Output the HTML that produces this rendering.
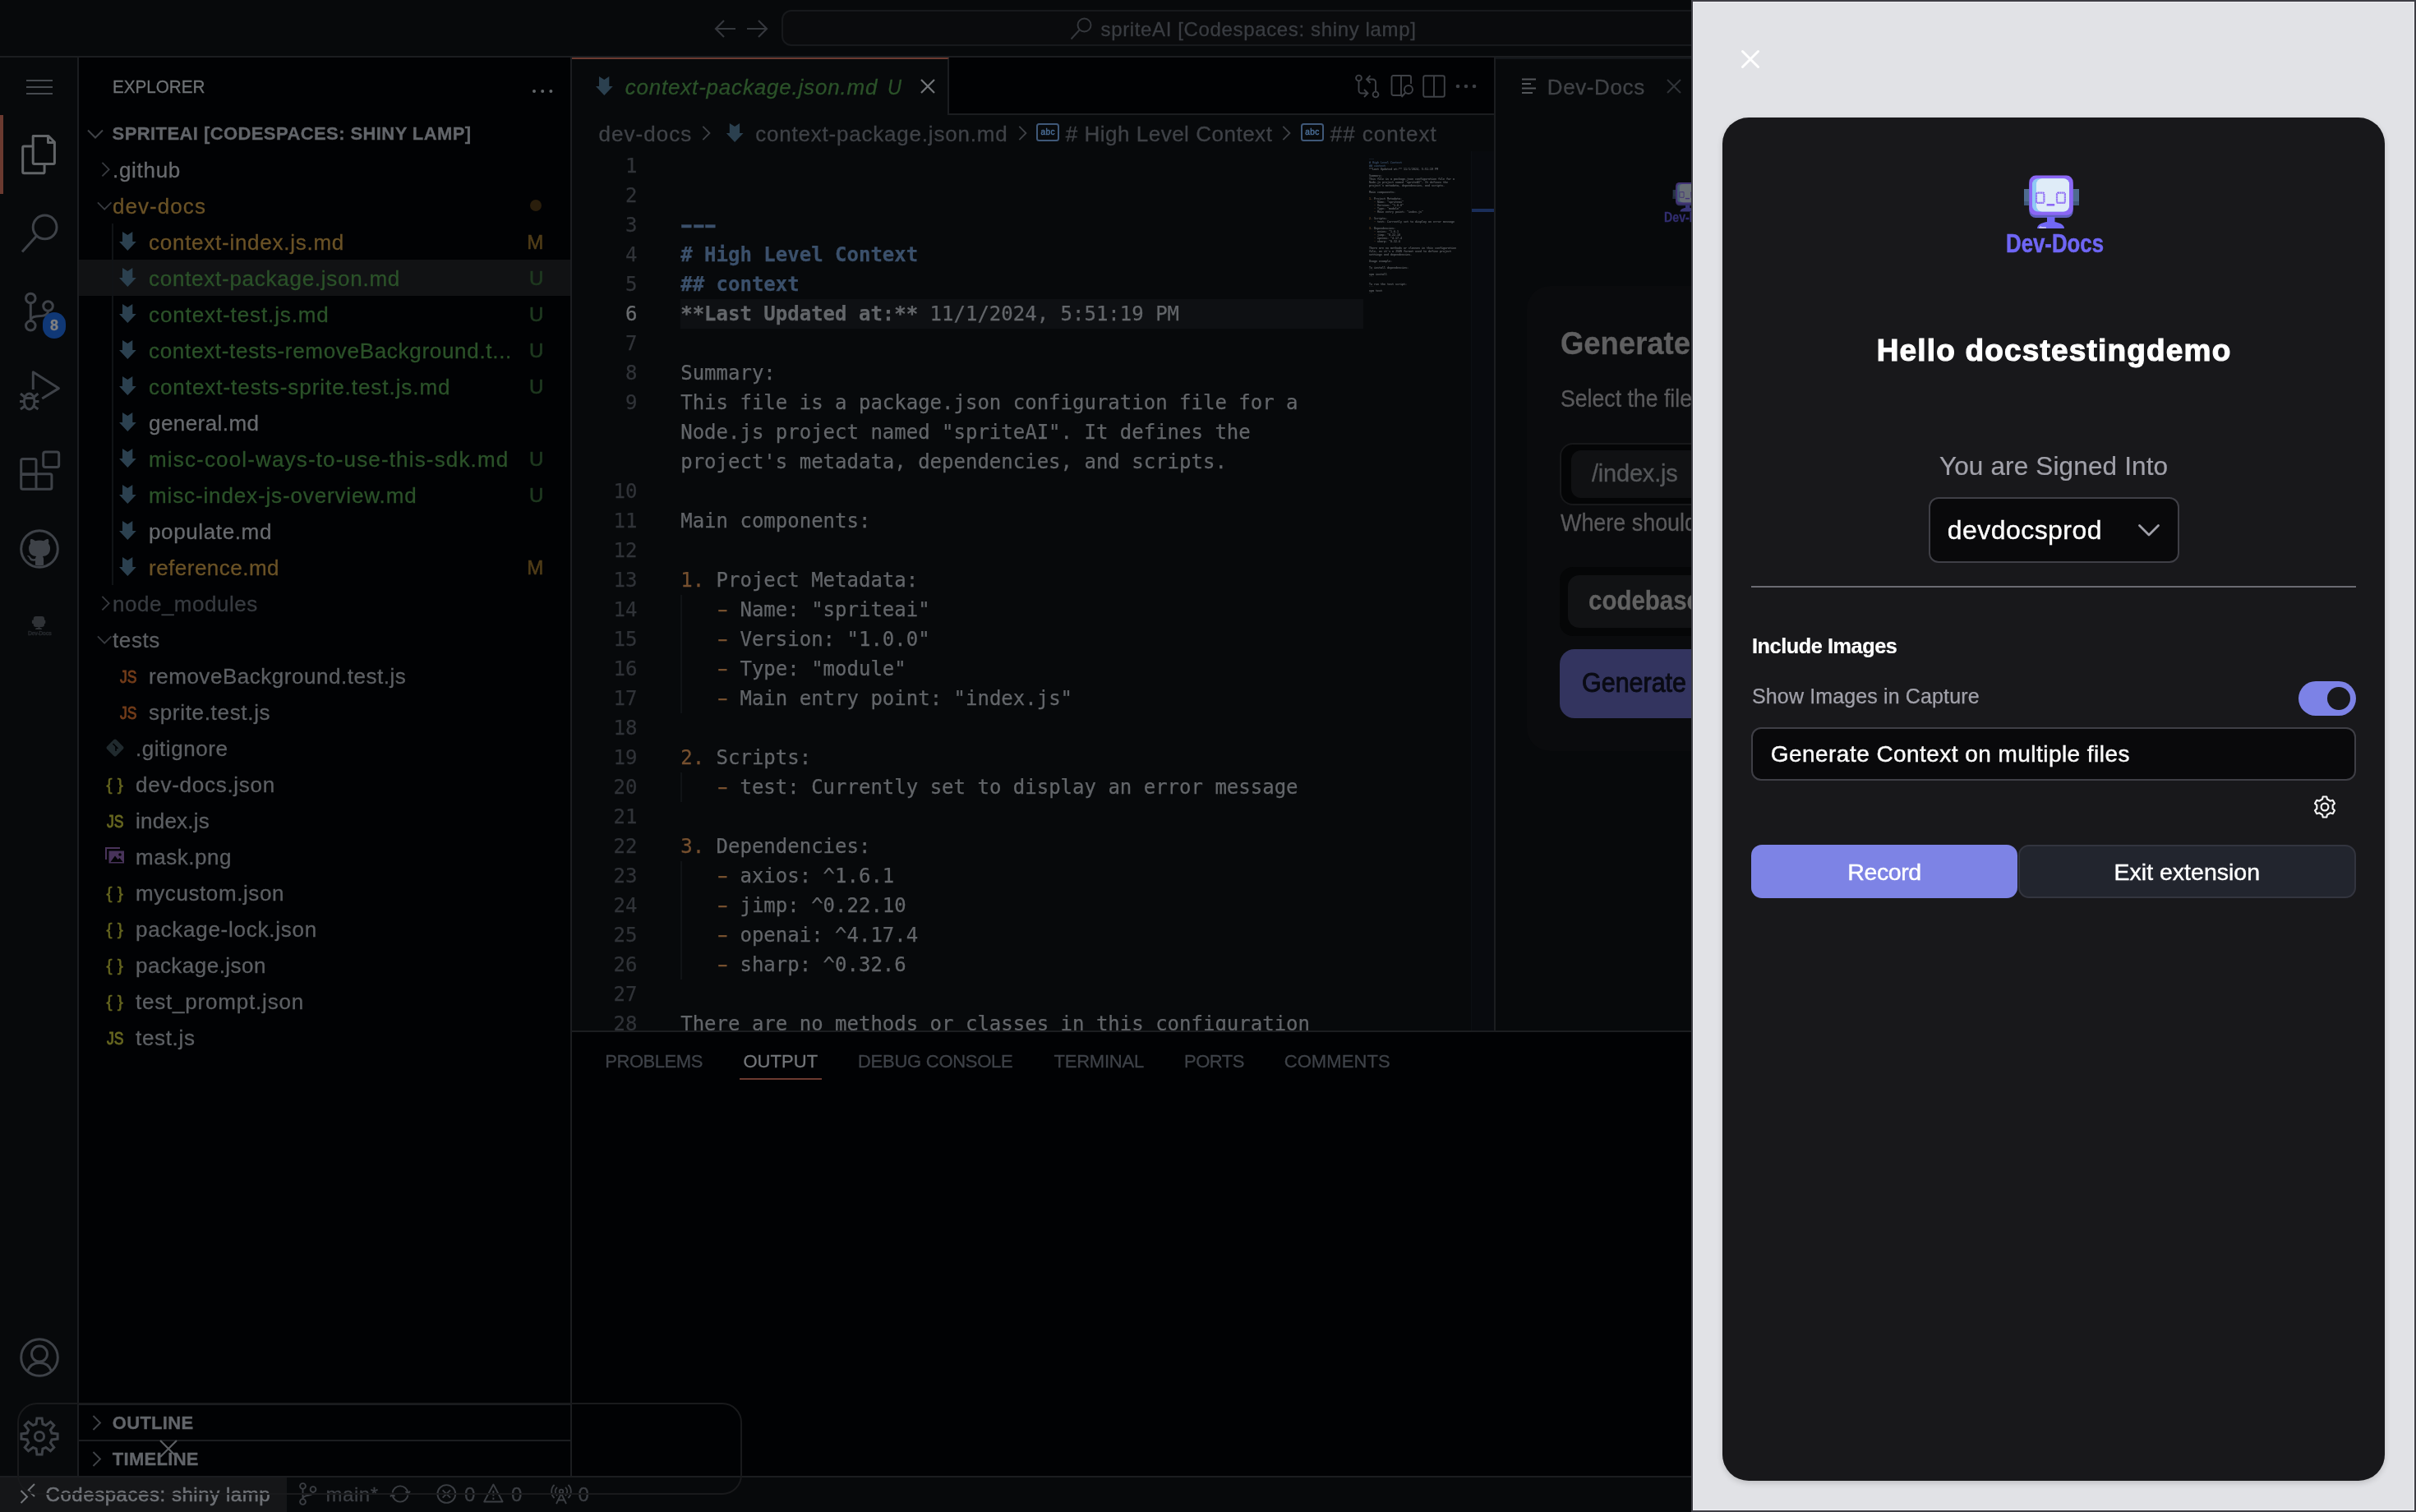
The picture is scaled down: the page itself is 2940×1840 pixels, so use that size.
<!DOCTYPE html>
<html lang="en"><head><meta charset="utf-8"><title>spriteAI [Codespaces: shiny lamp]</title>
<style>
html,body{margin:0;padding:0;background:#000;}
body{width:2940px;height:1840px;overflow:hidden;position:relative;font-family:"Liberation Sans", sans-serif;will-change:transform;}
.a{position:absolute;box-sizing:border-box;}
.t{position:absolute;white-space:pre;}
.s{font-family:"Liberation Sans", sans-serif;}
.m{font-family:"DejaVu Sans Mono", "Liberation Mono", monospace;}
svg{position:absolute;overflow:visible;}

</style></head>
<body>
<div class="a" style="left:0px;top:0px;width:2940px;height:1840px;background:#07090b;"></div>
<div class="a" style="left:0px;top:0px;width:2940px;height:70px;background:#07090b;border-bottom:2px solid #1b1d20;"></div>
<div class="a" style="left:0px;top:70px;width:96px;height:1726px;background:#07090b;border-right:2px solid #1b1d20;"></div>
<div class="a" style="left:96px;top:70px;width:600px;height:1726px;background:#010204;border-right:2px solid #1b1d20;"></div>
<div class="a" style="left:0px;top:1796px;width:2940px;height:44px;background:#07090b;border-top:2px solid #1b1d20;"></div>
<svg style="left:868px;top:22px" width="28" height="26" viewBox="0 0 28 26" ><path d="M13 3 L3 13 L13 23 M3 13 H27" fill="none" stroke="#35383d" stroke-width="2.2"/></svg>
<svg style="left:908px;top:22px" width="28" height="26" viewBox="0 0 28 26" ><path d="M15 3 L25 13 L15 23 M25 13 H1" fill="none" stroke="#35383d" stroke-width="2.2"/></svg>
<div class="a" style="left:951px;top:12px;width:1200px;height:44px;background:#0a0b0d;border:2px solid #17191c;border-radius:12px;"></div>
<svg style="left:1302px;top:20px" width="28" height="30" viewBox="0 0 28 30" ><circle cx="17.5" cy="10.5" r="8" fill="none" stroke="#35383d" stroke-width="1.9"/><path d="M11.5 16.5 L1.5 27.5" stroke="#35383d" stroke-width="1.9"/></svg>
<div class="t s" style="letter-spacing:0.641px;left:1339.5px;top:20.1px;font-size:24px;line-height:31px;color:#3a3d42;-webkit-text-stroke:0.3px;">spriteAI [Codespaces: shiny lamp]</div>
<svg style="left:32px;top:96px" width="32" height="20" viewBox="0 0 32 20" ><path d="M0 2H32M0 10H32M0 18H32" stroke="#464a4f" stroke-width="2" fill="none"/></svg>
<div class="a" style="left:0px;top:140px;width:4px;height:96px;background:#6b3a30;"></div>
<svg style="left:24px;top:162px" width="48" height="52" viewBox="0 0 48 52" ><g fill="none" stroke="#626568" stroke-width="3" stroke-linejoin="round"><path d="M16.2 3.5 H35 L42.4 11 V36 a1.5 1.5 0 0 1 -1.5 1.5 H17.7 a1.5 1.5 0 0 1 -1.5 -1.5 Z"/><path d="M34.5 3.5 V11.5 H42.4"/><path d="M16 16 H5.2 a1.5 1.5 0 0 0 -1.5 1.5 V47.3 a1.5 1.5 0 0 0 1.5 1.5 H28.6 a1.5 1.5 0 0 0 1.5 -1.5 V37.5"/></g></svg>
<svg style="left:24px;top:258px" width="48" height="52" viewBox="0 0 48 52" ><g fill="none" stroke="#3e4248" stroke-width="3"><circle cx="30.6" cy="18.4" r="14.4"/><path d="M20.6 29 L3 48.6"/></g></svg>
<svg style="left:24px;top:354px" width="48" height="52" viewBox="0 0 48 52" ><g fill="none" stroke="#3e4248" stroke-width="3"><circle cx="13.3" cy="9" r="5.8"/><circle cx="13.3" cy="42.3" r="5.8"/><circle cx="34.5" cy="18.5" r="5.8"/><path d="M13.3 14.8 V36.5"/><path d="M34.5 24.3 C34.5 31 26 30.5 20 31 C15.5 31.5 13.3 33 13.3 36.5"/></g></svg>
<div class="a" style="left:52px;top:380px;width:28px;height:32px;background:#103876;border-radius:14px;"></div>
<div class="t s" style="left:61.0px;top:384.7px;font-size:18px;line-height:23px;color:#808080;font-weight:700;-webkit-text-stroke:0.3px;">8</div>
<svg style="left:24px;top:450px" width="48" height="52" viewBox="0 0 48 52" ><g fill="none" stroke="#3e4248" stroke-width="3" stroke-linejoin="round"><path d="M16.3 24 V2.7 L47.4 22.6 L27.2 35"/><ellipse cx="11.7" cy="38.5" rx="6.3" ry="9.6"/><path d="M5.4 34.5 H18 M0 38.5 H5.4 M18 38.5 H23.4 M1 29 L5.8 33 M22.4 29 L17.6 33 M1 48 L5.8 44.5 M22.4 48 L17.6 44.5"/></g></svg>
<svg style="left:24px;top:546px" width="48" height="52" viewBox="0 0 48 52" ><g fill="none" stroke="#3e4248" stroke-width="3" stroke-linejoin="round"><rect x="1.7" y="12.5" width="18.3" height="19" rx="2"/><path d="M1.7 30.7 V47.3 a2 2 0 0 0 2 2 H36.9 a2 2 0 0 0 2 -2 V32.7 a2 2 0 0 0 -2 -2 H1.7 M20 30.7 V49.3"/><rect x="28.7" y="3.9" width="19" height="18.6" rx="2.5"/></g></svg>
<svg style="left:24px;top:644px" width="48" height="48" viewBox="0 0 48 48" ><g transform="translate(3.6 3.6) scale(2.55)"><path fill-rule="evenodd" fill="#3e4248" d="M8 0a8 8 0 1 0 0 16a8 8 0 1 0 0-16z M8 0C3.58 0 0 3.58 0 8c0 3.54 2.29 6.53 5.47 7.59.4.07.55-.17.55-.38 0-.19-.01-.82-.01-1.49-2.01.37-2.53-.49-2.69-.94-.09-.23-.48-.94-.82-1.13-.28-.15-.68-.52-.01-.53.63-.01 1.08.58 1.23.82.72 1.21 1.87.87 2.33.66.07-.52.28-.87.51-1.07-1.78-.2-3.64-.89-3.64-3.95 0-.87.31-1.59.82-2.15-.08-.2-.36-1.02.08-2.12 0 0 .67-.21 2.2.82.64-.18 1.32-.27 2-.27.68 0 1.36.09 2 .27 1.53-1.04 2.2-.82 2.2-.82.44 1.1.16 1.92.08 2.12.51.56.82 1.27.82 2.15 0 3.07-1.87 3.75-3.65 3.95.29.25.54.73.54 1.48 0 1.07-.01 1.93-.01 2.2 0 .21.15.46.55.38A8.013 8.013 0 0016 8c0-4.42-3.58-8-8-8z"/></g><circle cx="24" cy="24" r="22.3" fill="none" stroke="#3e4248" stroke-width="3"/></svg>
<svg style="left:30px;top:748px" width="36" height="20" viewBox="0 0 36 20" ><g fill="#2f3236"><rect x="10.7" y="2" width="13.3" height="13" rx="3"/><rect x="8.9" y="6.4" width="16.4" height="4.6" rx="1"/><rect x="16.6" y="14" width="1.9" height="3"/><path d="M13 18 a4 2.2 0 0 1 8 0z"/></g></svg>
<div class="t s" style="letter-spacing:-0.475px;left:34.0px;top:766.0px;font-size:7px;line-height:9px;color:#25282c;font-weight:700;-webkit-text-stroke:0.3px;">Dev-Docs</div>
<svg style="left:24px;top:1628px" width="48" height="48" viewBox="0 0 48 48" ><g fill="none" stroke="#3e4248" stroke-width="3"><circle cx="24" cy="24" r="22.3"/><circle cx="24" cy="19.6" r="9.5"/><path d="M9.5 40.5 C12 33.5 17 30.5 24 30.5 C31 30.5 36 33.5 38.5 40.5"/></g></svg>
<svg style="left:24px;top:1724px" width="48" height="48" viewBox="0 0 48 48" ><g fill="none" stroke="#3e4248" stroke-width="3" stroke-linejoin="miter"><path d="M20.07 9.01 L20.94 1.91 L27.06 1.91 L27.93 9.01 L31.82 10.62 L37.46 6.22 L41.78 10.54 L37.38 16.18 L38.99 20.07 L46.09 20.94 L46.09 27.06 L38.99 27.93 L37.38 31.82 L41.78 37.46 L37.46 41.78 L31.82 37.38 L27.93 38.99 L27.06 46.09 L20.94 46.09 L20.07 38.99 L16.18 37.38 L10.54 41.78 L6.22 37.46 L10.62 31.82 L9.01 27.93 L1.91 27.06 L1.91 20.94 L9.01 20.07 L10.62 16.18 L6.22 10.54 L10.54 6.22 L16.18 10.62Z"/><circle cx="24" cy="24" r="5.6"/></g></svg>
<div class="t s" style="left:136.6px;top:91.2px;font-size:22px;line-height:29px;color:#6e7275;transform-origin:0 50%;transform:scaleX(0.9380);-webkit-text-stroke:0.3px;">EXPLORER</div>
<svg style="left:647px;top:107px" width="26" height="8" viewBox="0 0 26 8" ><circle cx="3" cy="4" r="2" fill="#64686c"/><circle cx="13.2" cy="4" r="2" fill="#64686c"/><circle cx="23.4" cy="4" r="2" fill="#64686c"/></svg>
<svg style="left:106.0px;top:157.0px" width="20.0" height="12.0" viewBox="0 0 20 12" ><path d="M1 1.5 L10 10.5 L19 1.5" fill="none" stroke="#404348" stroke-width="2"/></svg>
<div class="t s" style="letter-spacing:0.414px;left:136.6px;top:147.8px;font-size:22px;line-height:29px;color:#62656a;font-weight:700;-webkit-text-stroke:0.3px;">SPRITEAI [CODESPACES: SHINY LAMP]</div>
<div class="a" style="left:96px;top:316px;width:598px;height:44px;background:#111214;"></div>
<div class="a" style="left:136px;top:272px;width:2px;height:440px;background:#101316;"></div>
<svg style="left:122.98px;top:196.8px" width="11.040000000000001" height="18.400000000000002" viewBox="0 0 12 20" ><path d="M1.5 1 L10.5 10 L1.5 19" fill="none" stroke="#373a3f" stroke-width="2"/></svg>
<div class="t s" style="letter-spacing:0.703px;left:137.0px;top:189.9px;font-size:26px;line-height:34px;color:#686b6f;-webkit-text-stroke:0.3px;">.github</div>
<svg style="left:118.3px;top:244.98px" width="18.400000000000002" height="11.040000000000001" viewBox="0 0 20 12" ><path d="M1 1.5 L10 10.5 L19 1.5" fill="none" stroke="#373a3f" stroke-width="2"/></svg>
<div class="t s" style="letter-spacing:1.062px;left:137.0px;top:233.9px;font-size:26px;line-height:34px;color:#6a5226;-webkit-text-stroke:0.3px;">dev-docs</div>
<div class="a" style="left:644.7px;top:242.8px;width:14.5px;height:14.5px;background:#2a1e0c;border-radius:7.25px;"></div>
<svg style="left:0;top:0" width="1" height="1"><polygon points="149.0,282.0 155.3,286.0 161.3,282.0 161.3,294.0 165.8,294.0 155.3,305.0 145.0,294.0 149.0,294.0" fill="#2b404f"/></svg>
<div class="t s" style="letter-spacing:0.738px;left:181.0px;top:277.9px;font-size:26px;line-height:34px;color:#6a5226;-webkit-text-stroke:0.3px;">context-index.js.md</div>
<div class="t s" style="right:2278.7px;top:279.1px;font-size:24px;line-height:31px;color:#4f3c18;-webkit-text-stroke:0.6px;">M</div>
<svg style="left:0;top:0" width="1" height="1"><polygon points="149.0,326.0 155.3,330.0 161.3,326.0 161.3,338.0 165.8,338.0 155.3,349.0 145.0,338.0 149.0,338.0" fill="#2b404f"/></svg>
<div class="t s" style="letter-spacing:0.737px;left:181.0px;top:321.9px;font-size:26px;line-height:34px;color:#2b5229;-webkit-text-stroke:0.3px;">context-package.json.md</div>
<div class="t s" style="right:2278.7px;top:323.1px;font-size:24px;line-height:31px;color:#1f3a20;-webkit-text-stroke:0.6px;">U</div>
<svg style="left:0;top:0" width="1" height="1"><polygon points="149.0,370.0 155.3,374.0 161.3,370.0 161.3,382.0 165.8,382.0 155.3,393.0 145.0,382.0 149.0,382.0" fill="#2b404f"/></svg>
<div class="t s" style="letter-spacing:0.887px;left:181.0px;top:365.9px;font-size:26px;line-height:34px;color:#2b5229;-webkit-text-stroke:0.3px;">context-test.js.md</div>
<div class="t s" style="right:2278.7px;top:367.1px;font-size:24px;line-height:31px;color:#1f3a20;-webkit-text-stroke:0.6px;">U</div>
<svg style="left:0;top:0" width="1" height="1"><polygon points="149.0,414.0 155.3,418.0 161.3,414.0 161.3,426.0 165.8,426.0 155.3,437.0 145.0,426.0 149.0,426.0" fill="#2b404f"/></svg>
<div class="t s" style="letter-spacing:0.696px;left:181.0px;top:409.9px;font-size:26px;line-height:34px;color:#2b5229;-webkit-text-stroke:0.3px;">context-tests-removeBackground.t...</div>
<div class="t s" style="right:2278.7px;top:411.1px;font-size:24px;line-height:31px;color:#1f3a20;-webkit-text-stroke:0.6px;">U</div>
<svg style="left:0;top:0" width="1" height="1"><polygon points="149.0,458.0 155.3,462.0 161.3,458.0 161.3,470.0 165.8,470.0 155.3,481.0 145.0,470.0 149.0,470.0" fill="#2b404f"/></svg>
<div class="t s" style="letter-spacing:0.948px;left:181.0px;top:453.9px;font-size:26px;line-height:34px;color:#2b5229;-webkit-text-stroke:0.3px;">context-tests-sprite.test.js.md</div>
<div class="t s" style="right:2278.7px;top:455.1px;font-size:24px;line-height:31px;color:#1f3a20;-webkit-text-stroke:0.6px;">U</div>
<svg style="left:0;top:0" width="1" height="1"><polygon points="149.0,502.0 155.3,506.0 161.3,502.0 161.3,514.0 165.8,514.0 155.3,525.0 145.0,514.0 149.0,514.0" fill="#2b404f"/></svg>
<div class="t s" style="letter-spacing:0.442px;left:181.0px;top:497.9px;font-size:26px;line-height:34px;color:#686b6f;-webkit-text-stroke:0.3px;">general.md</div>
<svg style="left:0;top:0" width="1" height="1"><polygon points="149.0,546.0 155.3,550.0 161.3,546.0 161.3,558.0 165.8,558.0 155.3,569.0 145.0,558.0 149.0,558.0" fill="#2b404f"/></svg>
<div class="t s" style="letter-spacing:1.158px;left:181.0px;top:541.9px;font-size:26px;line-height:34px;color:#2b5229;-webkit-text-stroke:0.3px;">misc-cool-ways-to-use-this-sdk.md</div>
<div class="t s" style="right:2278.7px;top:543.1px;font-size:24px;line-height:31px;color:#1f3a20;-webkit-text-stroke:0.6px;">U</div>
<svg style="left:0;top:0" width="1" height="1"><polygon points="149.0,590.0 155.3,594.0 161.3,590.0 161.3,602.0 165.8,602.0 155.3,613.0 145.0,602.0 149.0,602.0" fill="#2b404f"/></svg>
<div class="t s" style="letter-spacing:0.866px;left:181.0px;top:585.9px;font-size:26px;line-height:34px;color:#2b5229;-webkit-text-stroke:0.3px;">misc-index-js-overview.md</div>
<div class="t s" style="right:2278.7px;top:587.1px;font-size:24px;line-height:31px;color:#1f3a20;-webkit-text-stroke:0.6px;">U</div>
<svg style="left:0;top:0" width="1" height="1"><polygon points="149.0,634.0 155.3,638.0 161.3,634.0 161.3,646.0 165.8,646.0 155.3,657.0 145.0,646.0 149.0,646.0" fill="#2b404f"/></svg>
<div class="t s" style="letter-spacing:0.626px;left:181.0px;top:629.9px;font-size:26px;line-height:34px;color:#686b6f;-webkit-text-stroke:0.3px;">populate.md</div>
<svg style="left:0;top:0" width="1" height="1"><polygon points="149.0,678.0 155.3,682.0 161.3,678.0 161.3,690.0 165.8,690.0 155.3,701.0 145.0,690.0 149.0,690.0" fill="#2b404f"/></svg>
<div class="t s" style="letter-spacing:0.484px;left:181.0px;top:673.9px;font-size:26px;line-height:34px;color:#6a5226;-webkit-text-stroke:0.3px;">reference.md</div>
<div class="t s" style="right:2278.7px;top:675.1px;font-size:24px;line-height:31px;color:#4f3c18;-webkit-text-stroke:0.6px;">M</div>
<svg style="left:122.98px;top:724.8px" width="11.040000000000001" height="18.400000000000002" viewBox="0 0 12 20" ><path d="M1.5 1 L10.5 10 L1.5 19" fill="none" stroke="#373a3f" stroke-width="2"/></svg>
<div class="t s" style="letter-spacing:0.510px;left:137.0px;top:717.9px;font-size:26px;line-height:34px;color:#373b40;-webkit-text-stroke:0.3px;">node_modules</div>
<svg style="left:118.3px;top:772.98px" width="18.400000000000002" height="11.040000000000001" viewBox="0 0 20 12" ><path d="M1 1.5 L10 10.5 L19 1.5" fill="none" stroke="#373a3f" stroke-width="2"/></svg>
<div class="t s" style="letter-spacing:0.616px;left:137.0px;top:761.9px;font-size:26px;line-height:34px;color:#5c5f63;-webkit-text-stroke:0.3px;">tests</div>
<div class="t s" style="left:145.5px;top:810.0px;font-size:21.5px;line-height:28px;color:#723c1a;transform-origin:0 50%;transform:scaleX(0.8169);-webkit-text-stroke:0.9px;">JS</div>
<div class="t s" style="letter-spacing:0.534px;left:181.0px;top:805.9px;font-size:26px;line-height:34px;color:#5c5f63;-webkit-text-stroke:0.3px;">removeBackground.test.js</div>
<div class="t s" style="left:145.5px;top:854.0px;font-size:21.5px;line-height:28px;color:#723c1a;transform-origin:0 50%;transform:scaleX(0.8169);-webkit-text-stroke:0.9px;">JS</div>
<div class="t s" style="letter-spacing:0.684px;left:181.0px;top:849.9px;font-size:26px;line-height:34px;color:#5c5f63;-webkit-text-stroke:0.3px;">sprite.test.js</div>
<div class="t s" style="letter-spacing:0.543px;left:165.0px;top:893.9px;font-size:26px;line-height:34px;color:#5c5f63;-webkit-text-stroke:0.3px;">.gitignore</div>
<div class="t s" style="letter-spacing:0.208px;left:129.5px;top:940.6px;font-size:21px;line-height:27px;color:#666620;-webkit-text-stroke:0.6px;">{ }</div>
<div class="t s" style="letter-spacing:0.737px;left:165.0px;top:937.9px;font-size:26px;line-height:34px;color:#5c5f63;-webkit-text-stroke:0.3px;">dev-docs.json</div>
<div class="t s" style="left:129.5px;top:986.0px;font-size:21.5px;line-height:28px;color:#666620;transform-origin:0 50%;transform:scaleX(0.8169);-webkit-text-stroke:0.9px;">JS</div>
<div class="t s" style="letter-spacing:0.230px;left:165.0px;top:981.9px;font-size:26px;line-height:34px;color:#5c5f63;-webkit-text-stroke:0.3px;">index.js</div>
<div class="t s" style="letter-spacing:0.533px;left:165.0px;top:1025.9px;font-size:26px;line-height:34px;color:#5c5f63;-webkit-text-stroke:0.3px;">mask.png</div>
<div class="t s" style="letter-spacing:0.208px;left:129.5px;top:1072.7px;font-size:21px;line-height:27px;color:#666620;-webkit-text-stroke:0.6px;">{ }</div>
<div class="t s" style="letter-spacing:0.585px;left:165.0px;top:1069.9px;font-size:26px;line-height:34px;color:#5c5f63;-webkit-text-stroke:0.3px;">mycustom.json</div>
<div class="t s" style="letter-spacing:0.208px;left:129.5px;top:1116.7px;font-size:21px;line-height:27px;color:#666620;-webkit-text-stroke:0.6px;">{ }</div>
<div class="t s" style="letter-spacing:0.757px;left:165.0px;top:1113.9px;font-size:26px;line-height:34px;color:#5c5f63;-webkit-text-stroke:0.3px;">package-lock.json</div>
<div class="t s" style="letter-spacing:0.208px;left:129.5px;top:1160.7px;font-size:21px;line-height:27px;color:#666620;-webkit-text-stroke:0.6px;">{ }</div>
<div class="t s" style="letter-spacing:0.480px;left:165.0px;top:1157.9px;font-size:26px;line-height:34px;color:#5c5f63;-webkit-text-stroke:0.3px;">package.json</div>
<div class="t s" style="letter-spacing:0.208px;left:129.5px;top:1204.7px;font-size:21px;line-height:27px;color:#666620;-webkit-text-stroke:0.6px;">{ }</div>
<div class="t s" style="letter-spacing:0.799px;left:165.0px;top:1201.9px;font-size:26px;line-height:34px;color:#5c5f63;-webkit-text-stroke:0.3px;">test_prompt.json</div>
<div class="t s" style="left:129.5px;top:1250.0px;font-size:21.5px;line-height:28px;color:#666620;transform-origin:0 50%;transform:scaleX(0.8169);-webkit-text-stroke:0.9px;">JS</div>
<div class="t s" style="letter-spacing:0.668px;left:165.0px;top:1245.9px;font-size:26px;line-height:34px;color:#5c5f63;-webkit-text-stroke:0.3px;">test.js</div>
<svg style="left:128px;top:898px" width="24" height="24" viewBox="0 0 24 24" ><rect x="4" y="4" width="16" height="16" rx="2" transform="rotate(45 12 12)" fill="#202a2e"/><path d="M9.5 7 L13 10.5 V16 M13 10.5 L15.5 13" stroke="#010204" stroke-width="1.6" fill="none"/></svg>
<svg style="left:128px;top:1031px" width="24" height="22" viewBox="0 0 24 22" ><path d="M1 15 V1 H18" fill="none" stroke="#48335a" stroke-width="2"/><rect x="4.5" y="4.5" width="18.5" height="15" fill="#48335a"/><circle cx="18" cy="9" r="1.8" fill="#010204"/><path d="M6.5 18 L12 10.5 L15.5 15 L17.5 13 L21.5 18 Z" fill="#010204"/></svg>
<div class="a" style="left:96px;top:1708px;width:598px;height:2px;background:#1b1d20;"></div>
<div class="a" style="left:96px;top:1752px;width:598px;height:2px;background:#1b1d20;"></div>
<svg style="left:111.8px;top:1721.5px" width="11.399999999999999" height="19.0" viewBox="0 0 12 20" ><path d="M1.5 1 L10.5 10 L1.5 19" fill="none" stroke="#404348" stroke-width="2"/></svg>
<svg style="left:111.8px;top:1765.5px" width="11.399999999999999" height="19.0" viewBox="0 0 12 20" ><path d="M1.5 1 L10.5 10 L1.5 19" fill="none" stroke="#404348" stroke-width="2"/></svg>
<div class="t s" style="letter-spacing:0.291px;left:136.8px;top:1716.8px;font-size:22px;line-height:29px;color:#62656a;font-weight:700;-webkit-text-stroke:0.3px;">OUTLINE</div>
<div class="t s" style="letter-spacing:0.291px;left:136.8px;top:1760.8px;font-size:22px;line-height:29px;color:#62656a;font-weight:700;-webkit-text-stroke:0.3px;">TIMELINE</div>
<div class="a" style="left:0px;top:1798px;width:349px;height:42px;background:#151618;"></div>
<svg style="left:24px;top:1805px" width="20" height="26" viewBox="0 0 20 26" ><path d="M1.5 9 L9 16.5 L1.5 24 M18 1 L10.5 8.5 L18 16" fill="none" stroke="#73767a" stroke-width="2"/></svg>
<div class="t s" style="letter-spacing:0.547px;left:55.6px;top:1803.4px;font-size:24px;line-height:31px;color:#6d7075;-webkit-text-stroke:0.55px;">Codespaces: shiny lamp</div>
<svg style="left:363px;top:1804px" width="24" height="28" viewBox="0 0 24 28" ><g fill="none" stroke="#3b3e43" stroke-width="1.9"><circle cx="5.5" cy="4.5" r="3.4"/><circle cx="5.5" cy="23.5" r="3.4"/><circle cx="18" cy="8.5" r="3.4"/><path d="M5.5 8 V20 M18 12 C18 17.5 5.5 14 5.5 20"/></g></svg>
<div class="t s" style="letter-spacing:0.528px;left:396.5px;top:1803.4px;font-size:24px;line-height:31px;color:#3b3e43;-webkit-text-stroke:0.3px;">main*</div>
<svg style="left:475px;top:1806px" width="24" height="24" viewBox="0 0 24 24" ><g fill="none" stroke="#3b3e43" stroke-width="1.9"><path d="M2.6 10.5 A9.5 9.5 0 0 1 21.4 10.5 M21.4 13.5 A9.5 9.5 0 0 1 2.6 13.5"/><path d="M18.5 9 L21.6 11.8 L24 8.6 M5.5 15 L2.4 12.2 L0 15.4"/></g></svg>
<svg style="left:531px;top:1806px" width="25" height="25" viewBox="0 0 25 25" ><g fill="none" stroke="#3b3e43" stroke-width="1.9"><circle cx="12.3" cy="12" r="10.9"/><path d="M7.6 7.3 L17 16.7 M17 7.3 L7.6 16.7"/></g></svg>
<div class="t s" style="letter-spacing:-0.359px;left:565.0px;top:1803.4px;font-size:24px;line-height:31px;color:#3b3e43;-webkit-text-stroke:0.3px;">0</div>
<svg style="left:587.5px;top:1805px" width="25" height="24" viewBox="0 0 25 24" ><g fill="none" stroke="#3b3e43" stroke-width="1.9" stroke-linejoin="round"><path d="M12.4 1.5 L23.6 22.5 H1.2 Z"/><path d="M12.4 9 V15.5 M12.4 17.5 V20"/></g></svg>
<div class="t s" style="letter-spacing:-0.359px;left:622.0px;top:1803.4px;font-size:24px;line-height:31px;color:#3b3e43;-webkit-text-stroke:0.3px;">0</div>
<svg style="left:670.5px;top:1806px" width="24" height="26" viewBox="0 0 24 26" ><g fill="none" stroke="#3b3e43" stroke-width="1.8"><circle cx="12" cy="9" r="2.3"/><path d="M12 11.5 L6 24 M12 11.5 L18 24 M8.2 19.5 H15.8"/><path d="M7 3.8 A7 7 0 0 0 7 14.2 M17 3.8 A7 7 0 0 1 17 14.2 M3.6 1 A11 11 0 0 0 3.6 17 M20.4 1 A11 11 0 0 1 20.4 17"/></g></svg>
<div class="t s" style="letter-spacing:-0.359px;left:703.6px;top:1803.4px;font-size:24px;line-height:31px;color:#3b3e43;-webkit-text-stroke:0.3px;">0</div>
<div class="a" style="left:696px;top:70px;width:1122px;height:70px;background:#010204;border-bottom:2px solid #1b1d20;"></div>
<div class="a" style="left:696px;top:70px;width:458.5px;height:70px;background:#07090b;border-top:2px solid #6b3a30;border-right:2px solid #1b1d20;"></div>
<svg style="left:0;top:0" width="1" height="1"><polygon points="729.0,93.0 735.3,97.0 741.3,93.0 741.3,105.0 745.8,105.0 735.3,116.0 725.0,105.0 729.0,105.0" fill="#2b404f"/></svg>
<div class="t s" style="letter-spacing:0.802px;left:760.7px;top:88.9px;font-size:26px;line-height:34px;color:#2b5229;font-style:italic;-webkit-text-stroke:0.3px;">context-package.json.md</div>
<div class="t s" style="left:1080.0px;top:88.9px;font-size:26px;line-height:34px;color:#2b5229;font-style:italic;transform-origin:0 50%;transform:scaleX(0.9052);-webkit-text-stroke:0.3px;">U</div>
<svg style="left:1120px;top:96px" width="18" height="18" viewBox="0 0 18 18" ><path d="M1 1 L17 17 M17 1 L1 17" stroke="#73767a" stroke-width="2.2" fill="none"/></svg>
<svg style="left:1649px;top:90px" width="30" height="30" viewBox="0 0 30 30" ><g fill="none" stroke="#3e4146" stroke-width="1.9"><circle cx="4.5" cy="5" r="3.4"/><circle cx="25" cy="25" r="3.4"/><path d="M4.5 8.5 V20 a3.5 3.5 0 0 0 3.5 3.5 H15 M11 19 L15.5 23.5 L11 28"/><path d="M25 21.5 V10 a3.5 3.5 0 0 0 -3.5 -3.5 H14.5 M18.5 2 L14 6.5 L18.5 11"/></g></svg>
<svg style="left:1692px;top:90px" width="30" height="30" viewBox="0 0 30 30" ><g fill="none" stroke="#3e4146" stroke-width="1.9"><path d="M15 26 H3.5 a2 2 0 0 1 -2 -2 V4 a2 2 0 0 1 2 -2 H23 a2 2 0 0 1 2 2 V12"/><path d="M13 2 V26"/><circle cx="22" cy="19" r="5"/><path d="M18.5 22.5 L13.5 28"/></g></svg>
<svg style="left:1731px;top:91px" width="28" height="28" viewBox="0 0 28 28" ><g fill="none" stroke="#3e4146" stroke-width="1.9"><rect x="1.2" y="1.2" width="25.6" height="25.6" rx="2"/><path d="M14 1.2 V26.8"/></g></svg>
<svg style="left:1771px;top:101px" width="26" height="8" viewBox="0 0 26 8" ><circle cx="3" cy="4" r="2.3" fill="#3e4146"/><circle cx="13" cy="4" r="2.3" fill="#3e4146"/><circle cx="23" cy="4" r="2.3" fill="#3e4146"/></svg>
<div class="t s" style="letter-spacing:1.062px;left:728.4px;top:145.7px;font-size:26px;line-height:34px;color:#3f4247;-webkit-text-stroke:0.3px;">dev-docs</div>
<svg style="left:854.1px;top:153.0px" width="10.8" height="18.0" viewBox="0 0 12 20" ><path d="M1.5 1 L10.5 10 L1.5 19" fill="none" stroke="#3f4247" stroke-width="2"/></svg>
<svg style="left:0;top:0" width="1" height="1"><polygon points="887.8,150.0 894.1,154.0 900.1,150.0 900.1,162.0 904.6,162.0 894.1,173.0 883.8,162.0 887.8,162.0" fill="#2b404f"/></svg>
<div class="t s" style="letter-spacing:0.789px;left:919.2px;top:145.7px;font-size:26px;line-height:34px;color:#3f4247;-webkit-text-stroke:0.3px;">context-package.json.md</div>
<svg style="left:1238.6px;top:153.0px" width="10.8" height="18.0" viewBox="0 0 12 20" ><path d="M1.5 1 L10.5 10 L1.5 19" fill="none" stroke="#3f4247" stroke-width="2"/></svg>
<div class="a" style="left:1260.8px;top:150px;width:28.5px;height:22px;border:2px solid #3f5878;border-radius:3.5px;"></div>
<div class="t s" style="letter-spacing:0.425px;left:1266.5px;top:154.0px;font-size:10px;line-height:13px;color:#4a6d96;-webkit-text-stroke:0.45px;">abc</div>
<div class="t s" style="letter-spacing:0.516px;left:1296.7px;top:145.7px;font-size:26px;line-height:34px;color:#3f4247;-webkit-text-stroke:0.3px;"># High Level Context</div>
<svg style="left:1559.6px;top:153.0px" width="10.8" height="18.0" viewBox="0 0 12 20" ><path d="M1.5 1 L10.5 10 L1.5 19" fill="none" stroke="#3f4247" stroke-width="2"/></svg>
<div class="a" style="left:1582.5px;top:150px;width:28.5px;height:22px;border:2px solid #3f5878;border-radius:3.5px;"></div>
<div class="t s" style="letter-spacing:0.425px;left:1588.2px;top:154.0px;font-size:10px;line-height:13px;color:#4a6d96;-webkit-text-stroke:0.45px;">abc</div>
<div class="t s" style="letter-spacing:1.002px;left:1618.7px;top:145.7px;font-size:26px;line-height:34px;color:#3f4247;-webkit-text-stroke:0.3px;">## context</div>
<div class="a" style="left:696px;top:184px;width:1122px;height:1070px;overflow:hidden">
<div class="a" style="left:132px;top:180px;width:831px;height:36px;background:#0e1013"></div>
<div class="a" style="left:132px;top:540px;width:2px;height:144px;background:#101316"></div>
<div class="a" style="left:132px;top:756px;width:2px;height:36px;background:#101316"></div>
<div class="a" style="left:132px;top:864px;width:2px;height:144px;background:#101316"></div>
<div class="t m" style="right:1042.5px;top:0px;font-size:24px;line-height:36px;letter-spacing:0.02px;color:#303338;-webkit-text-stroke:0.25px">1</div>
<div class="t m" style="right:1042.5px;top:36px;font-size:24px;line-height:36px;letter-spacing:0.02px;color:#303338;-webkit-text-stroke:0.25px">2</div>
<div class="t m" style="right:1042.5px;top:72px;font-size:24px;line-height:36px;letter-spacing:0.02px;color:#303338;-webkit-text-stroke:0.25px">3</div>
<div class="t m" style="left:132.20000000000005px;top:72px;font-size:24px;line-height:36px;color:#63666a;-webkit-text-stroke:0.25px"><span style="color:#3b506b;font-weight:700;"><span style="display:inline-block;transform:scaleX(1.6)">-</span><span style="display:inline-block;transform:scaleX(1.6)">-</span><span style="display:inline-block;transform:scaleX(1.6)">-</span></span></div>
<div class="t m" style="right:1042.5px;top:108px;font-size:24px;line-height:36px;letter-spacing:0.02px;color:#303338;-webkit-text-stroke:0.25px">4</div>
<div class="t m" style="left:132.20000000000005px;top:108px;font-size:24px;line-height:36px;color:#63666a;-webkit-text-stroke:0.25px"><span style="color:#3b506b;font-weight:700;"># High Level Context</span></div>
<div class="t m" style="right:1042.5px;top:144px;font-size:24px;line-height:36px;letter-spacing:0.02px;color:#303338;-webkit-text-stroke:0.25px">5</div>
<div class="t m" style="left:132.20000000000005px;top:144px;font-size:24px;line-height:36px;color:#63666a;-webkit-text-stroke:0.25px"><span style="color:#3b506b;font-weight:700;">## context</span></div>
<div class="t m" style="right:1042.5px;top:180px;font-size:24px;line-height:36px;letter-spacing:0.02px;color:#6a6d70;-webkit-text-stroke:0.25px">6</div>
<div class="t m" style="left:132.20000000000005px;top:180px;font-size:24px;line-height:36px;color:#63666a;-webkit-text-stroke:0.25px"><span style="color:#63666a;font-weight:700;">**Last Updated at:**</span><span style="color:#63666a;"> 11/1/2024, 5:51:19 PM</span></div>
<div class="t m" style="right:1042.5px;top:216px;font-size:24px;line-height:36px;letter-spacing:0.02px;color:#303338;-webkit-text-stroke:0.25px">7</div>
<div class="t m" style="right:1042.5px;top:252px;font-size:24px;line-height:36px;letter-spacing:0.02px;color:#303338;-webkit-text-stroke:0.25px">8</div>
<div class="t m" style="left:132.20000000000005px;top:252px;font-size:24px;line-height:36px;color:#63666a;-webkit-text-stroke:0.25px"><span style="color:#63666a;">Summary:</span></div>
<div class="t m" style="right:1042.5px;top:288px;font-size:24px;line-height:36px;letter-spacing:0.02px;color:#303338;-webkit-text-stroke:0.25px">9</div>
<div class="t m" style="left:132.20000000000005px;top:288px;font-size:24px;line-height:36px;color:#63666a;-webkit-text-stroke:0.25px"><span style="color:#63666a;">This file is a package.json configuration file for a</span></div>
<div class="t m" style="left:132.20000000000005px;top:324px;font-size:24px;line-height:36px;color:#63666a;-webkit-text-stroke:0.25px"><span style="color:#63666a;">Node.js project named &quot;spriteAI&quot;. It defines the</span></div>
<div class="t m" style="left:132.20000000000005px;top:360px;font-size:24px;line-height:36px;color:#63666a;-webkit-text-stroke:0.25px"><span style="color:#63666a;">project&#x27;s metadata, dependencies, and scripts.</span></div>
<div class="t m" style="right:1042.5px;top:396px;font-size:24px;line-height:36px;letter-spacing:0.02px;color:#303338;-webkit-text-stroke:0.25px">10</div>
<div class="t m" style="right:1042.5px;top:432px;font-size:24px;line-height:36px;letter-spacing:0.02px;color:#303338;-webkit-text-stroke:0.25px">11</div>
<div class="t m" style="left:132.20000000000005px;top:432px;font-size:24px;line-height:36px;color:#63666a;-webkit-text-stroke:0.25px"><span style="color:#63666a;">Main components:</span></div>
<div class="t m" style="right:1042.5px;top:468px;font-size:24px;line-height:36px;letter-spacing:0.02px;color:#303338;-webkit-text-stroke:0.25px">12</div>
<div class="t m" style="right:1042.5px;top:504px;font-size:24px;line-height:36px;letter-spacing:0.02px;color:#303338;-webkit-text-stroke:0.25px">13</div>
<div class="t m" style="left:132.20000000000005px;top:504px;font-size:24px;line-height:36px;color:#63666a;-webkit-text-stroke:0.25px"><span style="color:#76502f;">1.</span><span style="color:#63666a;"> Project Metadata:</span></div>
<div class="t m" style="right:1042.5px;top:540px;font-size:24px;line-height:36px;letter-spacing:0.02px;color:#303338;-webkit-text-stroke:0.25px">14</div>
<div class="t m" style="left:132.20000000000005px;top:540px;font-size:24px;line-height:36px;color:#63666a;-webkit-text-stroke:0.25px"><span style="color:#76502f;">   <span style="display:inline-block;transform:scaleX(1.6)">-</span></span><span style="color:#63666a;"> Name: &quot;spriteai&quot;</span></div>
<div class="t m" style="right:1042.5px;top:576px;font-size:24px;line-height:36px;letter-spacing:0.02px;color:#303338;-webkit-text-stroke:0.25px">15</div>
<div class="t m" style="left:132.20000000000005px;top:576px;font-size:24px;line-height:36px;color:#63666a;-webkit-text-stroke:0.25px"><span style="color:#76502f;">   <span style="display:inline-block;transform:scaleX(1.6)">-</span></span><span style="color:#63666a;"> Version: &quot;1.0.0&quot;</span></div>
<div class="t m" style="right:1042.5px;top:612px;font-size:24px;line-height:36px;letter-spacing:0.02px;color:#303338;-webkit-text-stroke:0.25px">16</div>
<div class="t m" style="left:132.20000000000005px;top:612px;font-size:24px;line-height:36px;color:#63666a;-webkit-text-stroke:0.25px"><span style="color:#76502f;">   <span style="display:inline-block;transform:scaleX(1.6)">-</span></span><span style="color:#63666a;"> Type: &quot;module&quot;</span></div>
<div class="t m" style="right:1042.5px;top:648px;font-size:24px;line-height:36px;letter-spacing:0.02px;color:#303338;-webkit-text-stroke:0.25px">17</div>
<div class="t m" style="left:132.20000000000005px;top:648px;font-size:24px;line-height:36px;color:#63666a;-webkit-text-stroke:0.25px"><span style="color:#76502f;">   <span style="display:inline-block;transform:scaleX(1.6)">-</span></span><span style="color:#63666a;"> Main entry point: &quot;index.js&quot;</span></div>
<div class="t m" style="right:1042.5px;top:684px;font-size:24px;line-height:36px;letter-spacing:0.02px;color:#303338;-webkit-text-stroke:0.25px">18</div>
<div class="t m" style="right:1042.5px;top:720px;font-size:24px;line-height:36px;letter-spacing:0.02px;color:#303338;-webkit-text-stroke:0.25px">19</div>
<div class="t m" style="left:132.20000000000005px;top:720px;font-size:24px;line-height:36px;color:#63666a;-webkit-text-stroke:0.25px"><span style="color:#76502f;">2.</span><span style="color:#63666a;"> Scripts:</span></div>
<div class="t m" style="right:1042.5px;top:756px;font-size:24px;line-height:36px;letter-spacing:0.02px;color:#303338;-webkit-text-stroke:0.25px">20</div>
<div class="t m" style="left:132.20000000000005px;top:756px;font-size:24px;line-height:36px;color:#63666a;-webkit-text-stroke:0.25px"><span style="color:#76502f;">   <span style="display:inline-block;transform:scaleX(1.6)">-</span></span><span style="color:#63666a;"> test: Currently set to display an error message</span></div>
<div class="t m" style="right:1042.5px;top:792px;font-size:24px;line-height:36px;letter-spacing:0.02px;color:#303338;-webkit-text-stroke:0.25px">21</div>
<div class="t m" style="right:1042.5px;top:828px;font-size:24px;line-height:36px;letter-spacing:0.02px;color:#303338;-webkit-text-stroke:0.25px">22</div>
<div class="t m" style="left:132.20000000000005px;top:828px;font-size:24px;line-height:36px;color:#63666a;-webkit-text-stroke:0.25px"><span style="color:#76502f;">3.</span><span style="color:#63666a;"> Dependencies:</span></div>
<div class="t m" style="right:1042.5px;top:864px;font-size:24px;line-height:36px;letter-spacing:0.02px;color:#303338;-webkit-text-stroke:0.25px">23</div>
<div class="t m" style="left:132.20000000000005px;top:864px;font-size:24px;line-height:36px;color:#63666a;-webkit-text-stroke:0.25px"><span style="color:#76502f;">   <span style="display:inline-block;transform:scaleX(1.6)">-</span></span><span style="color:#63666a;"> axios: ^1.6.1</span></div>
<div class="t m" style="right:1042.5px;top:900px;font-size:24px;line-height:36px;letter-spacing:0.02px;color:#303338;-webkit-text-stroke:0.25px">24</div>
<div class="t m" style="left:132.20000000000005px;top:900px;font-size:24px;line-height:36px;color:#63666a;-webkit-text-stroke:0.25px"><span style="color:#76502f;">   <span style="display:inline-block;transform:scaleX(1.6)">-</span></span><span style="color:#63666a;"> jimp: ^0.22.10</span></div>
<div class="t m" style="right:1042.5px;top:936px;font-size:24px;line-height:36px;letter-spacing:0.02px;color:#303338;-webkit-text-stroke:0.25px">25</div>
<div class="t m" style="left:132.20000000000005px;top:936px;font-size:24px;line-height:36px;color:#63666a;-webkit-text-stroke:0.25px"><span style="color:#76502f;">   <span style="display:inline-block;transform:scaleX(1.6)">-</span></span><span style="color:#63666a;"> openai: ^4.17.4</span></div>
<div class="t m" style="right:1042.5px;top:972px;font-size:24px;line-height:36px;letter-spacing:0.02px;color:#303338;-webkit-text-stroke:0.25px">26</div>
<div class="t m" style="left:132.20000000000005px;top:972px;font-size:24px;line-height:36px;color:#63666a;-webkit-text-stroke:0.25px"><span style="color:#76502f;">   <span style="display:inline-block;transform:scaleX(1.6)">-</span></span><span style="color:#63666a;"> sharp: ^0.32.6</span></div>
<div class="t m" style="right:1042.5px;top:1008px;font-size:24px;line-height:36px;letter-spacing:0.02px;color:#303338;-webkit-text-stroke:0.25px">27</div>
<div class="t m" style="right:1042.5px;top:1044px;font-size:24px;line-height:36px;letter-spacing:0.02px;color:#303338;-webkit-text-stroke:0.25px">28</div>
<div class="t m" style="left:132.20000000000005px;top:1044px;font-size:24px;line-height:36px;color:#63666a;-webkit-text-stroke:0.25px"><span style="color:#63666a;">There are no methods or classes in this configuration</span></div>
</div>
<div class="a" style="left:1665.5px;top:183.5px;width:900px;height:1600px;transform-origin:0 0;transform:scale(0.13841);opacity:0.92">
<div class="t m" style="left:0;top:57.80px;font-size:24px;line-height:28.90px;font-weight:700"><span style="color:#3b506b;font-weight:700;">---</span></div>
<div class="t m" style="left:0;top:86.70px;font-size:24px;line-height:28.90px;font-weight:700"><span style="color:#3b506b;font-weight:700;"># High Level Context</span></div>
<div class="t m" style="left:0;top:115.60px;font-size:24px;line-height:28.90px;font-weight:700"><span style="color:#3b506b;font-weight:700;">## context</span></div>
<div class="t m" style="left:0;top:144.50px;font-size:24px;line-height:28.90px;font-weight:700"><span style="color:#63666a;font-weight:700;">**Last Updated at:**</span><span style="color:#63666a;"> 11/1/2024, 5:51:19 PM</span></div>
<div class="t m" style="left:0;top:202.30px;font-size:24px;line-height:28.90px;font-weight:700"><span style="color:#63666a;">Summary:</span></div>
<div class="t m" style="left:0;top:231.20px;font-size:24px;line-height:28.90px;font-weight:700"><span style="color:#63666a;">This file is a package.json configuration file for a</span></div>
<div class="t m" style="left:0;top:260.10px;font-size:24px;line-height:28.90px;font-weight:700"><span style="color:#63666a;">Node.js project named &quot;spriteAI&quot;. It defines the</span></div>
<div class="t m" style="left:0;top:289.00px;font-size:24px;line-height:28.90px;font-weight:700"><span style="color:#63666a;">project&#x27;s metadata, dependencies, and scripts.</span></div>
<div class="t m" style="left:0;top:346.80px;font-size:24px;line-height:28.90px;font-weight:700"><span style="color:#63666a;">Main components:</span></div>
<div class="t m" style="left:0;top:404.60px;font-size:24px;line-height:28.90px;font-weight:700"><span style="color:#76502f;">1.</span><span style="color:#63666a;"> Project Metadata:</span></div>
<div class="t m" style="left:0;top:433.50px;font-size:24px;line-height:28.90px;font-weight:700"><span style="color:#76502f;">   -</span><span style="color:#63666a;"> Name: &quot;spriteai&quot;</span></div>
<div class="t m" style="left:0;top:462.40px;font-size:24px;line-height:28.90px;font-weight:700"><span style="color:#76502f;">   -</span><span style="color:#63666a;"> Version: &quot;1.0.0&quot;</span></div>
<div class="t m" style="left:0;top:491.30px;font-size:24px;line-height:28.90px;font-weight:700"><span style="color:#76502f;">   -</span><span style="color:#63666a;"> Type: &quot;module&quot;</span></div>
<div class="t m" style="left:0;top:520.20px;font-size:24px;line-height:28.90px;font-weight:700"><span style="color:#76502f;">   -</span><span style="color:#63666a;"> Main entry point: &quot;index.js&quot;</span></div>
<div class="t m" style="left:0;top:578.00px;font-size:24px;line-height:28.90px;font-weight:700"><span style="color:#76502f;">2.</span><span style="color:#63666a;"> Scripts:</span></div>
<div class="t m" style="left:0;top:606.90px;font-size:24px;line-height:28.90px;font-weight:700"><span style="color:#76502f;">   -</span><span style="color:#63666a;"> test: Currently set to display an error message</span></div>
<div class="t m" style="left:0;top:664.70px;font-size:24px;line-height:28.90px;font-weight:700"><span style="color:#76502f;">3.</span><span style="color:#63666a;"> Dependencies:</span></div>
<div class="t m" style="left:0;top:693.60px;font-size:24px;line-height:28.90px;font-weight:700"><span style="color:#76502f;">   -</span><span style="color:#63666a;"> axios: ^1.6.1</span></div>
<div class="t m" style="left:0;top:722.50px;font-size:24px;line-height:28.90px;font-weight:700"><span style="color:#76502f;">   -</span><span style="color:#63666a;"> jimp: ^0.22.10</span></div>
<div class="t m" style="left:0;top:751.40px;font-size:24px;line-height:28.90px;font-weight:700"><span style="color:#76502f;">   -</span><span style="color:#63666a;"> openai: ^4.17.4</span></div>
<div class="t m" style="left:0;top:780.30px;font-size:24px;line-height:28.90px;font-weight:700"><span style="color:#76502f;">   -</span><span style="color:#63666a;"> sharp: ^0.32.6</span></div>
<div class="t m" style="left:0;top:838.10px;font-size:24px;line-height:28.90px;font-weight:700"><span style="color:#63666a;">There are no methods or classes in this configuration</span></div>
<div class="t m" style="left:0;top:867.00px;font-size:24px;line-height:28.90px;font-weight:700"><span style="color:#63666a;">file, as it&#x27;s a JSON format used to define project</span></div>
<div class="t m" style="left:0;top:895.90px;font-size:24px;line-height:28.90px;font-weight:700"><span style="color:#63666a;">settings and dependencies.</span></div>
<div class="t m" style="left:0;top:953.70px;font-size:24px;line-height:28.90px;font-weight:700"><span style="color:#63666a;">Usage example:</span></div>
<div class="t m" style="left:0;top:1011.50px;font-size:24px;line-height:28.90px;font-weight:700"><span style="color:#63666a;">To install dependencies:</span></div>
<div class="t m" style="left:0;top:1040.40px;font-size:24px;line-height:28.90px;font-weight:700"><span style="color:#63666a;">```</span></div>
<div class="t m" style="left:0;top:1069.30px;font-size:24px;line-height:28.90px;font-weight:700"><span style="color:#63666a;">npm install</span></div>
<div class="t m" style="left:0;top:1098.20px;font-size:24px;line-height:28.90px;font-weight:700"><span style="color:#63666a;">```</span></div>
<div class="t m" style="left:0;top:1156.00px;font-size:24px;line-height:28.90px;font-weight:700"><span style="color:#63666a;">To run the test script:</span></div>
<div class="t m" style="left:0;top:1184.90px;font-size:24px;line-height:28.90px;font-weight:700"><span style="color:#63666a;">```</span></div>
<div class="t m" style="left:0;top:1213.80px;font-size:24px;line-height:28.90px;font-weight:700"><span style="color:#63666a;">npm test</span></div>
<div class="t m" style="left:0;top:1242.70px;font-size:24px;line-height:28.90px;font-weight:700"><span style="color:#63666a;">```</span></div>
</div>
<div class="a" style="left:1791px;top:184px;width:27px;height:1070px;background:#0b0e1100;"></div>
<div class="a" style="left:1791px;top:184px;width:27px;height:1070px;background:#080a0e;"></div>
<div class="a" style="left:1791px;top:254px;width:27px;height:4px;background:#1a2e5a;"></div>
<div class="a" style="left:1790px;top:184px;width:1px;height:1070px;background:#0c0f13;"></div>
<div class="a" style="left:1818px;top:70px;width:2px;height:1186px;background:#1b1d20;"></div>
<div class="a" style="left:1820px;top:70px;width:300px;height:70px;background:#010204;border-bottom:2px solid #1b1d20;"></div>
<div class="a" style="left:1820px;top:70px;width:240px;height:70px;background:#07090b;border-top:2px solid #13161a;"></div>
<svg style="left:1852px;top:95px" width="18" height="20" viewBox="0 0 18 20" ><path d="M0 1.5H17M0 7H11M0 12.5H17M0 18H13" stroke="#54575b" stroke-width="2.2" fill="none"/></svg>
<div class="t s" style="letter-spacing:0.607px;left:1882.8px;top:88.9px;font-size:26px;line-height:34px;color:#404347;-webkit-text-stroke:0.3px;">Dev-Docs</div>
<svg style="left:2028px;top:96px" width="18" height="18" viewBox="0 0 18 18" ><path d="M1 1 L17 17 M17 1 L1 17" stroke="#303338" stroke-width="2" fill="none"/></svg>
<div class="a" style="left:1858px;top:348px;width:400px;height:566px;background:#0a0b0d;border-radius:28px;"></div>
<div class="t s" style="left:1898.8px;top:392.1px;font-size:39px;line-height:51px;color:#5f5f60;font-weight:700;transform-origin:0 50%;transform:scaleX(0.9344);-webkit-text-stroke:0.3px;">Generate</div>
<div class="t s" style="left:1898.8px;top:464.7px;font-size:30px;line-height:39px;color:#5a5a5c;transform-origin:0 50%;transform:scaleX(0.8883);-webkit-text-stroke:0.3px;">Select the file</div>
<div class="a" style="left:1898px;top:539px;width:400px;height:76px;background:#040506;border:2px solid #17181a;border-radius:16px;"></div>
<div class="a" style="left:1911.5px;top:548px;width:400px;height:58px;background:#101113;border-radius:12px;"></div>
<div class="t s" style="letter-spacing:-0.210px;left:1937.0px;top:557.4px;font-size:29px;line-height:38px;color:#55575a;-webkit-text-stroke:0.3px;">/index.js</div>
<div class="t s" style="left:1898.8px;top:616.0px;font-size:30px;line-height:39px;color:#5a5a5c;transform-origin:0 50%;transform:scaleX(0.8968);-webkit-text-stroke:0.3px;">Where should</div>
<div class="a" style="left:1898px;top:689.5px;width:400px;height:84px;background:#050607;border-radius:16px;"></div>
<div class="a" style="left:1908px;top:700px;width:400px;height:63.5px;background:#111214;border-radius:14px;"></div>
<div class="t s" style="left:1932.7px;top:709.0px;font-size:33px;line-height:43px;color:#626262;font-weight:700;transform-origin:0 50%;transform:scaleX(0.8933);-webkit-text-stroke:0.3px;">codebase</div>
<div class="a" style="left:1898px;top:790px;width:400px;height:84px;background:#33345f;border-radius:18px;"></div>
<div class="t s" style="left:1925.0px;top:809.0px;font-size:33px;line-height:43px;color:#0a0b14;transform-origin:0 50%;transform:scaleX(0.9230);-webkit-text-stroke:0.9px;">Generate</div>
<div class="a" style="left:696px;top:1254px;width:2244px;height:542px;background:#010204;border-top:2px solid #1b1d20;"></div>
<div class="t s" style="letter-spacing:-0.458px;left:736.3px;top:1276.8px;font-size:22px;line-height:29px;color:#3e4248;-webkit-text-stroke:0.3px;">PROBLEMS</div>
<div class="t s" style="letter-spacing:0.091px;left:904.4px;top:1276.8px;font-size:22px;line-height:29px;color:#73767a;-webkit-text-stroke:0.3px;">OUTPUT</div>
<div class="t s" style="letter-spacing:-0.264px;left:1044.0px;top:1276.8px;font-size:22px;line-height:29px;color:#3e4248;-webkit-text-stroke:0.3px;">DEBUG CONSOLE</div>
<div class="t s" style="letter-spacing:-0.219px;left:1282.5px;top:1276.8px;font-size:22px;line-height:29px;color:#3e4248;-webkit-text-stroke:0.3px;">TERMINAL</div>
<div class="t s" style="letter-spacing:-0.478px;left:1441.0px;top:1276.8px;font-size:22px;line-height:29px;color:#3e4248;-webkit-text-stroke:0.3px;">PORTS</div>
<div class="t s" style="letter-spacing:0.084px;left:1562.7px;top:1276.8px;font-size:22px;line-height:29px;color:#3e4248;-webkit-text-stroke:0.3px;">COMMENTS</div>
<div class="a" style="left:900px;top:1312px;width:100px;height:2px;background:#6b3a30;"></div>
<div class="a" style="left:21px;top:1707px;width:882px;height:112px;border:2px solid #191a1c;border-radius:24px;"></div>
<svg style="left:194px;top:1752px" width="22" height="22" viewBox="0 0 22 22" ><path d="M1 1 L21 21 M21 1 L1 21" stroke="#5c5f63" stroke-width="2.2" fill="none"/></svg>
<svg style="left:2001.2px;top:209px;opacity:0.45" width="110" height="55" viewBox="0 0 200 100">
<rect x="63" y="40" width="7" height="20" fill="#4e6b90"/><rect x="122" y="40" width="8" height="20" fill="#4e6b90"/>
<rect x="63" y="55" width="7" height="5" fill="#415a7c"/><rect x="122" y="55" width="8" height="5" fill="#415a7c"/>
<rect x="69.3" y="27" width="53.4" height="48" rx="8" fill="#5f5fc0"/>
<rect x="69.3" y="23.6" width="53.4" height="48.2" rx="8" fill="#8b67f5"/>
<rect x="73" y="27.3" width="45" height="40.3" rx="7" fill="#90caf5"/>
<rect x="78" y="27.3" width="40" height="40.3" rx="7" fill="#dfecf8"/>
<g fill="none" stroke="#8b67f5" stroke-width="2.2" stroke-dasharray="1.6 0.5"><rect x="78" y="44.6" width="9.4" height="12.3" rx="1.5"/><rect x="103" y="44.6" width="9.9" height="12.3" rx="1.5"/></g>
<rect x="90.6" y="58" width="9.6" height="2.6" fill="#8b67f5"/>
<rect x="91" y="74" width="9.5" height="7" fill="#7068f5"/>
<path d="M79 88 a16.5 8.6 0 0 1 33 0 z" fill="#7168f7"/>
</svg>
<div class="t s" style="left:2024.5px;top:253.9px;font-size:17px;line-height:22px;color:#322e70;font-weight:700;transform-origin:0 50%;transform:scaleX(0.8352);-webkit-text-stroke:0.3px;">Dev-Docs</div>
<div class="a" style="left:2058px;top:0px;width:882px;height:1840px;background:#e1e2e6;border:2px solid #3d3d44;box-shadow:inset 0 0 0 1px #eeeef2;"></div>
<svg style="left:2119px;top:61px" width="22" height="22" viewBox="0 0 22 22" ><path d="M1.5 1.5 L20.5 20.5 M20.5 1.5 L1.5 20.5" stroke="#ffffff" stroke-width="3" stroke-linecap="round" fill="none"/></svg>
<div class="a" style="left:2096px;top:143px;width:806px;height:1659px;background:#18181b;border-radius:32px;box-shadow:0 3px 7px rgba(0,0,0,0.15);"></div>
<svg style="left:2400px;top:190px" width="200" height="100" viewBox="0 0 200 100" >
<rect x="63" y="40" width="7" height="20" fill="#4e6b90"/><rect x="122" y="40" width="8" height="20" fill="#4e6b90"/>
<rect x="63" y="55" width="7" height="5" fill="#415a7c"/><rect x="122" y="55" width="8" height="5" fill="#415a7c"/>
<rect x="69.3" y="27" width="53.4" height="48" rx="8" fill="#5f5fc0"/>
<rect x="69.3" y="23.6" width="53.4" height="48.2" rx="8" fill="#8b67f5"/>
<rect x="73" y="27.3" width="45" height="40.3" rx="7" fill="#90caf5"/>
<rect x="78" y="27.3" width="40" height="40.3" rx="7" fill="#dfecf8"/>
<g fill="none" stroke="#8b67f5" stroke-width="2.2" stroke-dasharray="1.6 0.5"><rect x="78" y="44.6" width="9.4" height="12.3" rx="1.5"/><rect x="103" y="44.6" width="9.9" height="12.3" rx="1.5"/></g>
<rect x="90.6" y="58" width="9.6" height="2.6" fill="#8b67f5"/>
<rect x="91" y="74" width="9.5" height="7" fill="#7068f5"/>
<path d="M79 88 a16.5 8.6 0 0 1 33 0 z" fill="#7168f7"/>
</svg>
<div class="t s" style="letter-spacing:-0.295px;left:2481.2px;top:273.6px;font-size:4.2px;line-height:5px;color:#f0f0ff;font-weight:700;">docs</div>
<div class="t s" style="left:2441.0px;top:274.7px;font-size:32px;line-height:42px;color:#6f66f5;font-weight:700;transform-origin:0 50%;transform:scaleX(0.8062);-webkit-text-stroke:0.5px;">Dev-Docs</div>
<div class="t s" style="letter-spacing:1.178px;left:2283.7px;top:402.9px;font-size:37px;line-height:48px;color:#ffffff;font-weight:700;-webkit-text-stroke:1.1px;">Hello docstestingdemo</div>
<div class="t s" style="letter-spacing:0.149px;left:2359.9px;top:547.3px;font-size:31.5px;line-height:41px;color:#a1a1aa;-webkit-text-stroke:0.2px;">You are Signed Into</div>
<div class="a" style="left:2346.5px;top:605.3px;width:305px;height:79.5px;background:#09090b;border:2px solid #3f3f46;border-radius:12px;"></div>
<div class="t s" style="letter-spacing:0.442px;left:2369.8px;top:624.4px;font-size:32px;line-height:42px;color:#ffffff;-webkit-text-stroke:0.35px;">devdocsprod</div>
<svg style="left:2602px;top:638px" width="26" height="15" viewBox="0 0 26 15" ><path d="M1.5 1.5 L13 13 L24.5 1.5" fill="none" stroke="#a1a1aa" stroke-width="2.8" stroke-linecap="round" stroke-linejoin="round"/></svg>
<div class="a" style="left:2131px;top:713px;width:736px;height:2px;background:#6b6b73;"></div>
<div class="t s" style="letter-spacing:-0.455px;left:2132.0px;top:769.7px;font-size:25.3px;line-height:33px;color:#ffffff;font-weight:700;-webkit-text-stroke:0.2px;">Include Images</div>
<div class="t s" style="letter-spacing:0.133px;left:2132.0px;top:830.9px;font-size:25px;line-height:32px;color:#a1a1aa;-webkit-text-stroke:0.25px;">Show Images in Capture</div>
<div class="a" style="left:2797px;top:829px;width:70px;height:42px;background:#7c82e6;border-radius:21px;"></div>
<div class="a" style="left:2832px;top:836px;width:28px;height:28px;background:#18181b;border-radius:14px;"></div>
<div class="a" style="left:2131px;top:885px;width:736px;height:64.5px;background:#09090b;border:2px solid #3f3f46;border-radius:12px;"></div>
<div class="t s" style="letter-spacing:0.451px;left:2154.8px;top:900.1px;font-size:28px;line-height:36px;color:#fafafa;-webkit-text-stroke:0.45px;">Generate Context on multiple files</div>
<svg style="left:2815px;top:968px" width="28" height="28" viewBox="0 0 28 28" ><g fill="none" stroke="#f4f4f5" stroke-width="2.2" stroke-linejoin="round"><path d="M11.04 4.55 L11.75 1.50 L16.25 1.50 L16.96 4.55 L20.70 6.71 L23.70 5.80 L25.95 9.70 L23.66 11.84 L23.66 16.16 L25.95 18.30 L23.70 22.20 L20.70 21.29 L16.96 23.45 L16.25 26.50 L11.75 26.50 L11.04 23.45 L7.30 21.29 L4.30 22.20 L2.05 18.30 L4.34 16.16 L4.34 11.84 L2.05 9.70 L4.30 5.80 L7.30 6.71Z"/><circle cx="14" cy="14" r="4.4"/></g></svg>
<div class="a" style="left:2131px;top:1028px;width:324.3px;height:65px;background:#7d83e5;border-radius:13px;"></div>
<div class="t s" style="letter-spacing:-0.412px;left:2248.3px;top:1042.7px;font-size:28.5px;line-height:37px;color:#ffffff;-webkit-text-stroke:0.4px;">Record</div>
<div class="a" style="left:2456.3px;top:1028px;width:410.7px;height:65px;background:#22252e;border:2px solid #33353f;border-radius:13px;"></div>
<div class="t s" style="letter-spacing:0.012px;left:2572.5px;top:1042.7px;font-size:28.5px;line-height:37px;color:#ffffff;-webkit-text-stroke:0.4px;">Exit extension</div>
</body></html>
